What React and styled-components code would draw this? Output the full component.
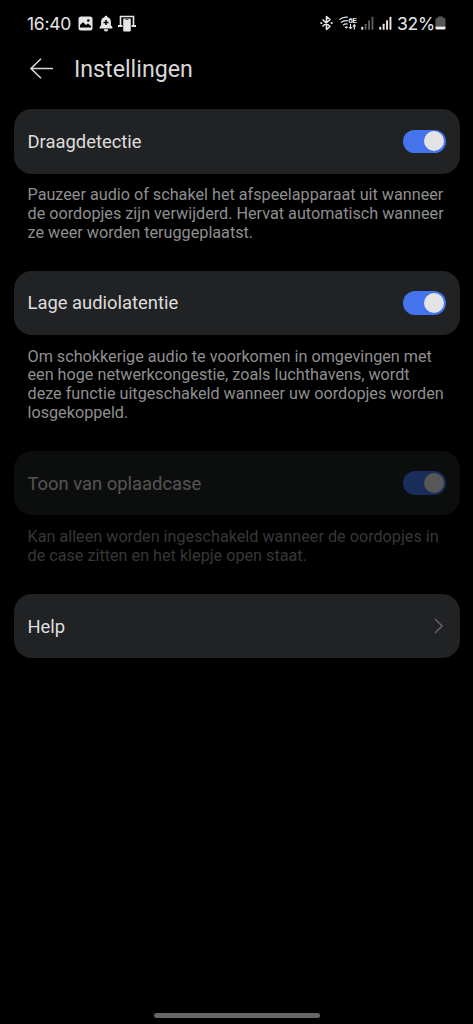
import styled, { createGlobalStyle } from "styled-components";

const GlobalStyle = createGlobalStyle`
	* {
		box-sizing: border-box;
	}
	body {
		margin: 0;
		background: #000;
		font-family: Roboto, "Liberation Sans", sans-serif;
	}
`;

const Screen = styled.div`
	display: flex;
	flex-direction: column;
	width: 473px;
	height: 1024px;
	background: #000;
	overflow: hidden;
`;

const StatusBar = styled.div`
	display: flex;
	justify-content: space-between;
	height: 46px;
	padding: 0 27px;
	color: #e6e6e6;
`;

const StatusGroup = styled.div`
	display: flex;
	align-items: center;
	height: 46px;
`;

const StatusText = styled.span`
	width: ${(props) => props.$width}px;
	margin-left: ${(props) => props.$gap || 0}px;
	font-family: Inter, Roboto, sans-serif;
	font-size: 17.5px;
	letter-spacing: -0.25px;
	white-space: nowrap;
`;

const StatusIcon = styled.svg`
	display: block;
	flex: none;
	margin-left: ${(props) => props.$gap || 0}px;
`;

const Header = styled.header`
	display: flex;
	align-items: center;
	height: 45px;
	padding-left: 29px;
`;

const Title = styled.h1`
	margin: 0 0 0 20px;
	color: #d9d9d9;
	font-size: 23.2px;
	font-weight: 400;
`;

const Content = styled.main`
	flex: 1;
	padding: 18px 13.5px 0;
`;

const Section = styled.section`
	margin-bottom: 28.3px;
	opacity: ${(props) => (props.$disabled ? 0.38 : 1)};
`;

const Card = styled.div`
	display: flex;
	align-items: center;
	justify-content: space-between;
	height: 64.6px;
	padding: 0 13.5px 0 14px;
	border-radius: 18px;
	background: #212224;
`;

const Label = styled.span`
	color: #dedede;
	font-size: 18.4px;
`;

const Description = styled.p`
	margin: 12.6px 0 0;
	padding-left: 14px;
	color: #8f8f8f;
	font-size: 16.2px;
	line-height: 18.7px;
	white-space: pre-line;
`;

const Switch = styled.div`
	display: flex;
	align-items: center;
	justify-content: flex-end;
	width: 43px;
	height: 23.5px;
	padding-right: 2px;
	border-radius: 12px;
	background: #4473ec;
`;

const Knob = styled.div`
	width: 20px;
	height: 20px;
	border-radius: 50%;
	background: #e4e4e6;
`;

const NavHandle = styled.div`
	align-self: center;
	width: 166px;
	height: 5px;
	margin-bottom: 6px;
	border-radius: 3px;
	background: #666;
`;

const settings = [
	{
		id: "wear",
		label: "Draagdetectie",
		text: "Pauzeer audio of schakel het afspeelapparaat uit wanneer\nde oordopjes zijn verwijderd. Hervat automatisch wanneer\nze weer worden teruggeplaatst.",
	},
	{
		id: "latency",
		label: "Lage audiolatentie",
		text: "Om schokkerige audio te voorkomen in omgevingen met\neen hoge netwerkcongestie, zoals luchthavens, wordt\ndeze functie uitgeschakeld wanneer uw oordopjes worden\nlosgekoppeld.",
	},
	{
		id: "case",
		label: "Toon van oplaadcase",
		text: "Kan alleen worden ingeschakeld wanneer de oordopjes in\nde case zitten en het klepje open staat.",
		disabled: true,
	},
];

function ImageIcon() {
	return (
		<StatusIcon $gap={7} width="15" height="15" viewBox="0 0 15 15">
			<rect x="0.5" y="0.5" width="14" height="14" rx="2.5" fill="#e6e6e6" />
			<path d="M2 11.5V9l3-2.7 3 2.7 2-1.6 3 2.5v1.6z" fill="#000" />
			<circle cx="10.3" cy="4.5" r="1.3" fill="#000" />
		</StatusIcon>
	);
}

function BellIcon() {
	return (
		<StatusIcon $gap={6} width="14" height="17" viewBox="0 0 14 17">
			<path
				d="M7 .7c.9 0 1.4.6 1.4 1.4 2.1.6 3.5 2.3 3.5 4.4v3.8l1.5 1.7v1.5H.6V12l1.5-1.7V6.500c0-2.100 1.400-3.800 3.500-4.400C5.600 1.300 6.100.7 7 .7z"
				fill="#e6e6e6"
			/>
			<path d="M4.800 14.300h4.400a2.200 2.200 0 0 1-4.400 0z" fill="#e6e6e6" />
			<path d="M7 5v5M4.500 7.500h5" stroke="#000" strokeWidth="1.500" />
		</StatusIcon>
	);
}

function DeviceIcon() {
	return (
		<StatusIcon $gap={5} width="18" height="17" viewBox="0 0 18 17">
			<path d="M2.500 10V1.500h13V10" fill="none" stroke="#e6e6e6" strokeWidth="1.600" />
			<path d="M0 11h4.500M13.500 11H18" stroke="#e6e6e6" strokeWidth="2.200" />
			<rect x="5.200" y="3.500" width="7.600" height="13" rx="1" fill="#e6e6e6" />
			<path d="M7.500 4.300h3" stroke="#333" />
		</StatusIcon>
	);
}

function BluetoothIcon() {
	return (
		<StatusIcon width="13" height="16" viewBox="0 0 13 16">
			<path
				d="M2.500 4.500l7.500 7-3.500 3v-13l3.500 3-7.500 7"
				fill="none"
				stroke="#e6e6e6"
				strokeWidth="1.600"
				strokeLinejoin="round"
			/>
			<circle cx="1.300" cy="8" r="1.100" fill="#e6e6e6" />
			<circle cx="11.700" cy="8" r="1.100" fill="#e6e6e6" />
		</StatusIcon>
	);
}

function WifiIcon() {
	return (
		<StatusIcon $gap={6} width="18" height="16" viewBox="0 0 18 16">
			<g fill="none" stroke="#e6e6e6" strokeWidth="1.300">
				<path d="M.5 4.500C2.700 2.700 5.500 1.900 8.700 2.200" />
				<path d="M2 7.400c1.900-1.500 4.200-2 6.800-1.600" />
				<path d="M4 10.200c1.400-1.100 3-1.500 4.700-1.100" />
			</g>
			<path d="M5.500 12q2-1.300 3.500-.2l-1.700 2z" fill="#e6e6e6" />
			<text
				x="9.200"
				y="7.500"
				fill="#e6e6e6"
				fontFamily="Roboto"
				fontSize="8"
				fontWeight="700"
				textLength="8.500"
			>
				6E
			</text>
			<path d="M11.500 9v4M15.300 14.500v-4" stroke="#e6e6e6" strokeWidth="1.200" />
			<path d="M9.500 12h4l-2 2.500zM13.300 11.500h4l-2-2.700z" fill="#e6e6e6" />
		</StatusIcon>
	);
}

function SignalIcon({ bars, gap }) {
	return (
		<StatusIcon $gap={gap} width="13" height="14" viewBox="0 0 13 14">
			{[3, 6, 9.5, 13].map((height, i) => (
				<rect
					key={height}
					x={0.3 + i * 3.4}
					y={13.8 - height}
					width="1.9"
					height={height}
					rx="0.5"
					fill={i < bars ? "#e6e6e6" : "#5c5c5c"}
				/>
			))}
		</StatusIcon>
	);
}

function BatteryIcon() {
	return (
		<StatusIcon $gap={1} width="11" height="14" viewBox="0 0 11 14">
			<path d="M3 .5h5V2h1.200q1.300 0 1.300 1.300V10.500H.5V3.300Q.5 2 1.800 2H3z" fill="#565656" />
			<path d="M.5 10.500h10v1.700q0 1.300-1.300 1.300H1.800q-1.300 0-1.300-1.300z" fill="#eee" />
		</StatusIcon>
	);
}

export default function App() {
	return (
		<Screen>
			<GlobalStyle />
			<StatusBar>
				<StatusGroup>
					<StatusText $width={44}>16:40</StatusText>
					<ImageIcon />
					<BellIcon />
					<DeviceIcon />
				</StatusGroup>
				<StatusGroup>
					<BluetoothIcon />
					<WifiIcon />
					<SignalIcon bars={1} gap={4} />
					<SignalIcon bars={4} gap={5} />
					<StatusText $width={37} $gap={5.5}>
						32%
					</StatusText>
					<BatteryIcon />
				</StatusGroup>
			</StatusBar>
			<Header>
				<svg width="25" height="22" viewBox="0 0 25 22">
					<path
						d="M24 10.500H2M12 .8l-10 9.700 10 9.700"
						fill="none"
						stroke="#d6d6d6"
						strokeWidth="1.600"
					/>
				</svg>
				<Title>Instellingen</Title>
			</Header>
			<Content>
				{settings.map((item) => (
					<Section key={item.id} $disabled={item.disabled}>
						<Card>
							<Label>{item.label}</Label>
							<Switch role="switch" aria-checked="true">
								<Knob />
							</Switch>
						</Card>
						<Description>{item.text}</Description>
					</Section>
				))}
				<Card>
					<Label>Help</Label>
					<svg width="13" height="18" viewBox="0 0 13 18">
						<path
							d="M2 2l7 7-7 7"
							fill="none"
							stroke="#5e5e60"
							strokeWidth="1.700"
						/>
					</svg>
				</Card>
			</Content>
			<NavHandle />
		</Screen>
	);
}
